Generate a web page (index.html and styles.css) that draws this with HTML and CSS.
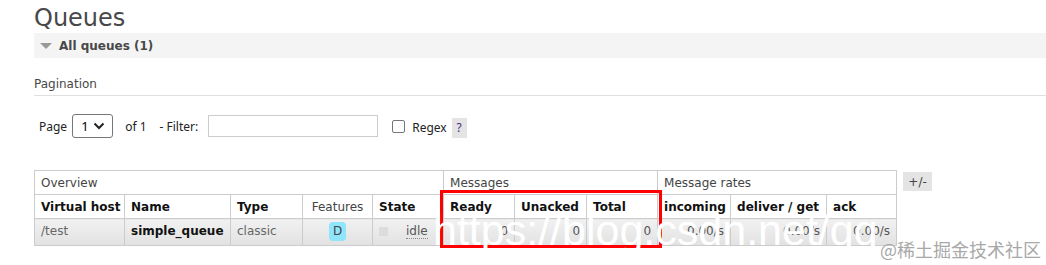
FILE: index.html
```html
<!DOCTYPE html>
<html>
<head>
<meta charset="utf-8">
<link rel="stylesheet" href="styles.css">
</head>
<body>
<div class="main">
  <h1 class="title">Queues</h1>
  <div class="section-head"><span class="tri"></span><span class="section-title">All queues (1)</span></div>
  <h3 class="pag-title">Pagination</h3>
  <div class="pag-row">
    <span class="lbl">Page</span>
    <span class="select"><span>1</span><svg width="12" height="8" viewBox="0 0 12 8"><path d="M1.5 1.5 L6 6 L10.5 1.5" fill="none" stroke="#222" stroke-width="2"/></svg></span>
    <span class="lbl of">of 1</span>
    <span class="lbl filter">- Filter:</span>
    <span class="input"></span>
    <span class="checkbox"></span>
    <span class="lbl regex">Regex</span>
    <span class="help">?</span>
  </div>
  <div class="table-wrap">
    <table class="list">
      <colgroup>
        <col class="w90"><col class="w106"><col class="w72"><col class="w70"><col class="w71">
        <col class="w71"><col class="w72"><col class="w71">
        <col class="w73"><col class="w96"><col class="w70">
      </colgroup>
      <tr class="group">
        <th colspan="5">Overview</th>
        <th colspan="3">Messages</th>
        <th colspan="3">Message rates</th>
      </tr>
      <tr class="heads">
        <th>Virtual host</th><th>Name</th><th>Type</th><th class="plain c">Features</th><th>State</th>
        <th>Ready</th><th>Unacked</th><th>Total</th>
        <th>incoming</th><th>deliver / get</th><th>ack</th>
      </tr>
      <tr class="data">
        <td class="muted">/test</td>
        <td class="bold">simple_queue</td>
        <td class="muted">classic</td>
        <td class="c"><span class="badge">D</span></td>
        <td><span class="state"><span class="sq"></span><span class="idle">idle</span></span></td>
        <td class="r">0</td><td class="r">0</td><td class="r">0</td>
        <td class="r">0.00/s</td><td class="r">0.00/s</td><td class="r">0.00/s</td>
      </tr>
    </table>
    <span class="toggle">+/-</span>
    <div class="redbox"></div>
    <div class="wm">https://blog.csdn.net/qq_38845</div>
    <div class="wm2">@稀土掘金技术社区</div>
  </div>
</div>
</body>
</html>
```
FILE: styles.css
```css
* { box-sizing: border-box; }
html, body { margin: 0; padding: 0; background: #fff; }
body { font-family: "DejaVu Sans", Verdana, sans-serif; font-size: 12px; color: #484848; width: 1046px; height: 265px; overflow: hidden; }
.main { padding-left: 34px; }
.title { margin: 0; padding-top: 3px; font-size: 24px; font-weight: normal; line-height: 30px; height: 33px; color: #484848; }
.section-head { height: 25px; background: #f4f4f4; display: flex; align-items: center; padding-left: 6px; }
.tri { width: 0; height: 0; border-left: 6px solid transparent; border-right: 6px solid transparent; border-top: 6px solid #999; margin-right: 7px; }
.section-title { font-weight: bold; font-size: 12px; color: #484848; }
.pag-title { margin: 18px 0 0 0; font-size: 12px; font-weight: normal; line-height: 16px; padding-bottom: 3px; border-bottom: 1px solid #e0e0e0; color: #484848; }
.pag-row { display: flex; align-items: center; margin-top: 18px; height: 24px; padding-left: 5px; color: #222; }
.lbl { font-family: "Noto Sans", "DejaVu Sans", sans-serif; font-size: 12px; }
.select { width: 41px; height: 24px; border: 1px solid #767676; border-radius: 3px; margin-left: 5px; display: flex; align-items: center; justify-content: space-between; padding: 0 7px 0 8px; font-family: "Noto Sans", sans-serif; font-size: 13px; color: #000; }
.of { margin-left: 12px; }
.filter { margin-left: 13px; }
.input { width: 170px; height: 22px; border: 1px solid #ccc; margin-left: 10px; }
.checkbox { width: 13px; height: 13px; border: 1px solid #767676; border-radius: 2px; margin-left: 14px; }
.regex { margin-left: 7px; margin-top: 3px; }
.help { margin-left: 5px; width: 15px; height: 20px; background: #e4e4e4; color: #4b2b7a; display: flex; align-items: center; justify-content: center; margin-top: 3px; font-family: "Noto Sans", sans-serif; font-size: 12px; }
.table-wrap { position: relative; margin-top: 32px; display: flex; align-items: flex-start; }
.list { border-collapse: collapse; table-layout: fixed; width: 862px; }
.w90 { width: 90px; } .w106 { width: 106px; } .w72 { width: 72px; } .w70 { width: 70px; }
.w71 { width: 71px; } .w73 { width: 73px; } .w96 { width: 96px; }
.list th, .list td { border: 1px solid #ccc; padding: 0 6px; text-align: left; white-space: nowrap; overflow: hidden; }
.group th { font-weight: normal; height: 24px; color: #444; }
.heads th { font-weight: bold; height: 24px; color: #111; }
.heads th.plain { font-weight: normal; color: #444; }
.list th.c, .list td.c { text-align: center; }
.data td { height: 27px; padding-top: 2px; padding-bottom: 4px; background: linear-gradient(#f1f1f1, #e2e2e2); color: #111; }
.data td.muted { color: #666; }
.data td.bold { font-weight: bold; color: #111; }
.data td.r { text-align: right; color: #555; }
.badge { display: inline-block; background: #8fe5fb; border-radius: 4px; width: 17px; height: 19px; line-height: 19px; text-align: center; color: #444; }
.state { display: flex; align-items: center; }
.sq { width: 9px; height: 9px; background: #dcdcdc; margin-right: 18px; }
.idle { border-bottom: 1px dotted #888; color: #555; line-height: 14px; }
.toggle { margin-left: 6px; margin-top: 2px; width: 29px; height: 19px; background: #e4e4e4; display: flex; align-items: center; justify-content: center; color: #444; font-size: 12px; }
.redbox { position: absolute; left: 406px; top: 20px; width: 222px; height: 58px; border: 3px solid #f00; }
.wm { position: absolute; left: 399px; top: 37px; font-family: "Liberation Sans", Arial, sans-serif; font-size: 43px; color: #fff; white-space: nowrap; line-height: 46px; }
.wm2 { position: absolute; left: 846px; top: 67px; font-family: "Noto Sans CJK SC", sans-serif; font-size: 18px; color: #a8a8a8; white-space: nowrap; line-height: 24px; }
```
